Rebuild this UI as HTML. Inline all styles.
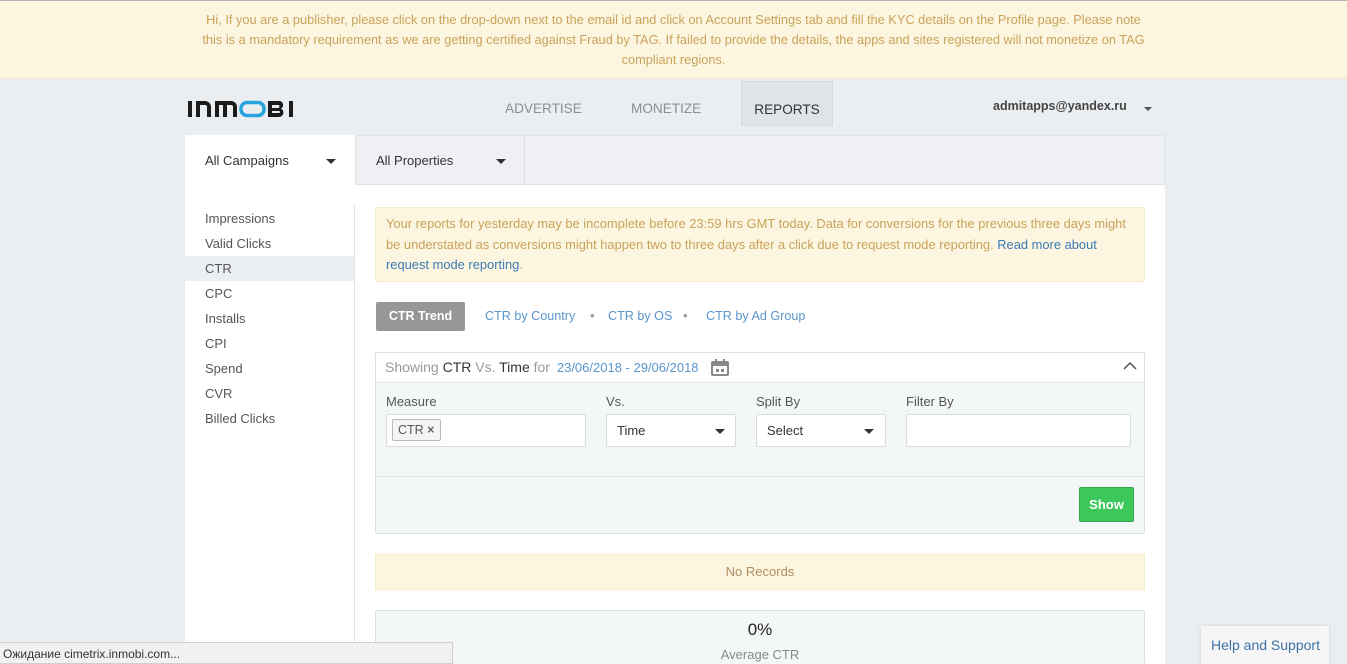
<!DOCTYPE html>
<html><head><meta charset="utf-8"><style>
*{box-sizing:border-box;margin:0;padding:0}
html,body{width:1347px;height:664px;overflow:hidden}
body{background:#ebeef1;font-family:"Liberation Sans",Arial,sans-serif;font-size:13px;color:#444;position:relative}
.abs{position:absolute}
.banner{left:0;top:0;width:1347px;height:79px;background:#fcf6e1;border-top:1px solid #b5b5b5;border-bottom:2px solid #f8efd8;color:#cba259;text-align:center;line-height:20px;padding-top:9px;font-size:12.8px}
.nav{font-size:13.6px;color:#8a8f94}
a{color:#4a86c0;text-decoration:none}
.side div{height:25px;line-height:25px;padding-left:20px;color:#555;font-size:13px}
.inp{background:#fff;border:1px solid #d9dcdf;border-radius:2px;height:33px}
.caret{width:0;height:0;border-left:5px solid transparent;border-right:5px solid transparent;border-top:5px solid #333;position:absolute}
</style></head><body>
<div class="abs banner">Hi, If you are a publisher, please click on the drop-down next to the email id and click on Account Settings tab and fill the KYC details on the Profile page. Please note<br>this is a mandatory requirement as we are getting certified against Fraud by TAG. If failed to provide the details, the apps and sites registered will not monetize on TAG<br>compliant regions.</div>

<svg class="abs" style="left:188px;top:100px" width="108" height="18" viewBox="0 0 108 18">
<g fill="#1b1b1b"><rect x="0" y="1" width="4" height="16"/>
<path d="M8 17V1h9a6 6 0 0 1 6 6v10h-4V7a2 2 0 0 0-2-2h-5v12z"/>
<path d="M27 17V1h16a6 6 0 0 1 6 6v10h-4V7a2 2 0 0 0-2-2h-4v12h-4V5h-4v12z"/>
<path d="M80 1h11a4 4 0 0 1 2 7.5a4.5 4.5 0 0 1-2 8.5H80zM84 5v3h6a1.5 1.5 0 0 0 0-3zM84 11v2h7a1 1 0 0 0 0-2z"/>
<rect x="101" y="1" width="4" height="16"/></g>
<rect x="53" y="2.5" width="23" height="13" rx="6" fill="none" stroke="#29a3dc" stroke-width="3.5"/>
</svg>
<div class="abs nav" style="left:505px;top:101px">ADVERTISE</div>
<div class="abs nav" style="left:631px;top:101px">MONETIZE</div>
<div class="abs" style="left:741px;top:81px;width:92px;height:45px;background:#dfe4e9;border:1px solid #d5dae0;color:#333;font-size:13.6px;text-align:center;line-height:55px">REPORTS</div>
<div class="abs" style="left:993px;top:99px;color:#444;font-weight:bold;font-size:12.5px">admitapps@yandex.ru</div>
<div class="caret" style="left:1144px;top:107px;border-width:4px 4px 0 4px;border-top-color:#555"></div>

<div class="abs" style="left:185px;top:135px;width:980px;height:50px;background:#eef0f3;border:1px solid #e2e5e8"></div>
<div class="abs" style="left:185px;top:135px;width:170px;height:51px;background:#fff;color:#333;padding:18px 20px">All Campaigns</div>
<div class="caret" style="left:326px;top:159px"></div>
<div class="abs" style="left:355px;top:135px;width:170px;height:50px;border-left:1px solid #dde0e3;border-right:1px solid #dde0e3;color:#333;padding:18px 20px">All Properties</div>
<div class="caret" style="left:496px;top:159px"></div>

<div class="abs" style="left:185px;top:185px;width:980px;height:479px;background:#fff"></div>
<div class="abs" style="left:354px;top:205px;width:1px;height:459px;background:#e2e4e6"></div>
<div class="abs side" style="left:185px;top:206px;width:169px">
<div>Impressions</div><div>Valid Clicks</div><div style="background:#eceff2">CTR</div><div>CPC</div><div>Installs</div><div>CPI</div><div>Spend</div><div>CVR</div><div>Billed Clicks</div></div>

<div class="abs" style="left:375px;top:207px;width:770px;height:75px;background:#fcf6e1;border:1px solid #f6ebcd;border-radius:2px;color:#c9a25a;padding:6px 10px;line-height:20.5px;font-size:12.9px">Your reports for yesterday may be incomplete before 23:59 hrs GMT today. Data for conversions for the previous three days might<br>be understated as conversions might happen two to three days after a click due to request mode reporting. <a style="color:#3c7ab4">Read more about<br>request mode reporting</a>.</div>

<div class="abs" style="left:376px;top:302px;width:89px;height:29px;background:#979797;border-radius:2px;color:#fff;font-weight:bold;text-align:center;line-height:29px;font-size:12.5px">CTR Trend</div>
<div class="abs" style="left:485px;top:309px;color:#5b95cc;font-size:12.6px">CTR by Country</div>
<div class="abs" style="left:590px;top:308px;color:#999">•</div>
<div class="abs" style="left:608px;top:309px;color:#5b95cc;font-size:12.6px">CTR by OS</div>
<div class="abs" style="left:683px;top:308px;color:#999">•</div>
<div class="abs" style="left:706px;top:309px;color:#5b95cc;font-size:12.6px">CTR by Ad Group</div>

<div class="abs" style="left:375px;top:352px;width:770px;height:182px;background:#f4f7f8;border:1px solid #dde0e3;border-radius:2px"></div>
<div class="abs" style="left:376px;top:353px;width:768px;height:30px;background:#fff;border-bottom:1px solid #e2e5e8"></div>
<div class="abs" style="left:385px;top:359px;font-size:14px;color:#999;white-space:nowrap">Showing <span style="color:#333">CTR</span> Vs. <span style="color:#333">Time</span> for <span style="color:#5b95cc;font-size:13px;margin-left:3px">23/06/2018 - 29/06/2018</span></div>
<svg class="abs" style="left:711px;top:359px" width="18" height="17" viewBox="0 0 18 17"><rect x="1" y="3" width="16" height="13" rx="1" fill="none" stroke="#888" stroke-width="2"/><rect x="1" y="3" width="16" height="4" fill="#888"/><rect x="4" y="0" width="2" height="4" fill="#888"/><rect x="12" y="0" width="2" height="4" fill="#888"/><rect x="5" y="10" width="3" height="3" fill="#888"/><rect x="10" y="10" width="3" height="3" fill="#888"/></svg>
<svg class="abs" style="left:1123px;top:362px" width="14" height="9"><path d="M1 7L7 1L13 7" fill="none" stroke="#555" stroke-width="1.5"/></svg>

<div class="abs" style="left:386px;top:394px;color:#555">Measure</div>
<div class="abs" style="left:606px;top:394px;color:#555">Vs.</div>
<div class="abs" style="left:756px;top:394px;color:#555">Split By</div>
<div class="abs" style="left:906px;top:394px;color:#555">Filter By</div>
<div class="abs inp" style="left:386px;top:414px;width:200px"></div>
<div class="abs" style="left:392px;top:419px;width:49px;height:22px;background:#f2f4f5;border:1px solid #bbb;border-radius:2px;padding:3px 5px;color:#555;white-space:nowrap;font-size:12.5px">CTR <b style="color:#666">×</b></div>
<div class="abs inp" style="left:606px;top:414px;width:130px;color:#333;padding:8px 10px">Time</div>
<div class="caret" style="left:715px;top:429px"></div>
<div class="abs inp" style="left:756px;top:414px;width:130px;color:#333;padding:8px 10px">Select</div>
<div class="caret" style="left:864px;top:429px"></div>
<div class="abs inp" style="left:906px;top:414px;width:225px"></div>
<div class="abs" style="left:376px;top:476px;width:768px;height:1px;background:#e2e5e8"></div>
<div class="abs" style="left:1079px;top:487px;width:55px;height:35px;background:#3dc65a;border:1px solid #2ea84a;border-radius:2px;color:#fff;font-weight:bold;text-align:center;line-height:33px">Show</div>

<div class="abs" style="left:375px;top:554px;width:770px;height:36px;background:#fcf6e1;border:1px solid #f6ebcd;color:#b09060;text-align:center;line-height:34px">No Records</div>

<div class="abs" style="left:375px;top:610px;width:770px;height:54px;background:#f4f7f8;border:1px solid #dde0e3;border-bottom:none;border-radius:2px"></div>
<div class="abs" style="left:375px;top:620px;width:770px;text-align:center;font-size:17px;color:#222">0%</div>
<div class="abs" style="left:375px;top:647px;width:770px;text-align:center;color:#888">Average CTR</div>

<div class="abs" style="left:0;top:642px;width:453px;height:22px;background:#f1f1f1;border:1px solid #cfcfcf;border-left:none;font-size:12px;color:#333;padding:4px 3px;white-space:nowrap">Ожидание cimetrix.inmobi.com...</div>
<div class="abs" style="left:1201px;top:626px;width:128px;height:38px;background:#f6f6f6;box-shadow:0 0 3px #ccc;color:#3f73a8;font-size:14px;padding:11px 10px;white-space:nowrap">Help and Support</div>
</body></html>
